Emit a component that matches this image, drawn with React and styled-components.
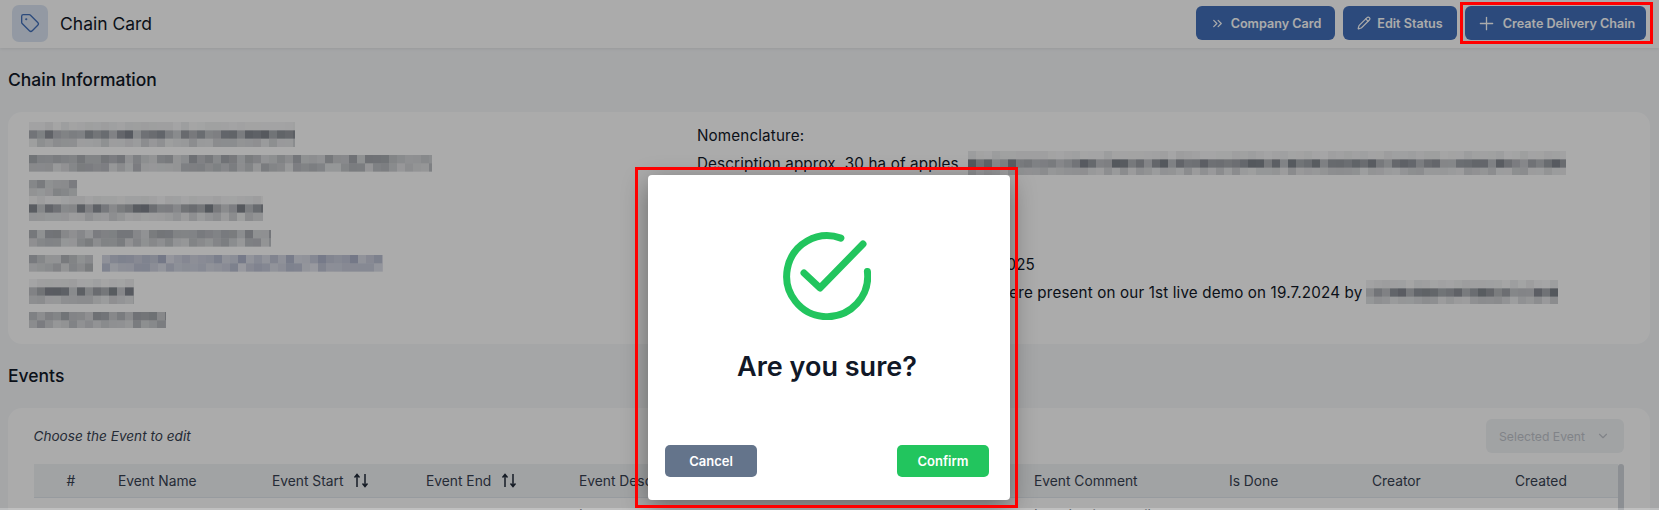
import { useMemo } from "react";
import styled, { createGlobalStyle } from "styled-components";
import { Tag, ChevronsRight, Pencil, Plus, ChevronDown } from "lucide-react";

const GlobalStyle = createGlobalStyle`
  html, body {
    margin: 0;
    height: 510px;
    overflow: hidden;
    background: #f6f8fa;
    font-family: Inter, "Noto Sans", "Liberation Sans", sans-serif;
    color: #111827;
  }
`;

const ROW_WEIGHTS = {
  2: [0.3, 0.24],
  3: [0.07, 0.42, 0.16],
};

// pixelated redaction, the same block pattern for the same seed
function Redacted({ width, rows = 2, seed = 1, tint, top = 0 }) {
  const cols = Math.ceil(width / 8);
  const cells = useMemo(() => {
    let s = seed * 7919;
    const next = () => {
      s = (s * 9301 + 49297) % 233280;
      return s / 233280;
    };
    const out = [];
    for (let r = 0; r < rows; r++) {
      for (let c = 0; c < cols; c++) {
        out.push({ r, c, o: ROW_WEIGHTS[rows][r] * (0.55 + next() * 0.9) });
      }
    }
    return out;
  }, [cols, rows, seed]);
  return (
    <MosaicSvg $top={top} width={width} height={rows * 8.33} viewBox={`0 0 ${width} ${rows * 8}`} preserveAspectRatio="none">
      {cells.map(({ r, c, o }) => (
        <rect key={`${r}-${c}`} x={c * 8} y={r * 8} width={8} height={8} fill={tint || "#2b3340"} opacity={o} />
      ))}
    </MosaicSvg>
  );
}

function SortArrows() {
  return (
    <svg width="16" height="15" viewBox="0 0 16 15" fill="none" stroke="#1f2937" strokeWidth="1.5">
      <path d="M4 14V1.5M1.5 4.5L4 1.5L6.5 4.5" />
      <path d="M12 1V13.5M9.5 10.5L12 13.5L14.5 10.5" />
    </svg>
  );
}

function ConfirmMark() {
  return (
    <svg width="88" height="88" viewBox="0 0 88 88" fill="none" stroke="#22c55e" strokeWidth="7" strokeLinecap="round" strokeLinejoin="round">
      <path d="M57.9 6.1A40.5 40.5 0 1 0 84.4 39.5" />
      <path d="M21 41L37 56L80 12" />
    </svg>
  );
}

export default function App() {
  return (
    <>
      <GlobalStyle />
      <Page>
        <Header>
          <TitleGroup>
            <TagBadge>
              <Tag size={20} strokeWidth={1.6} />
            </TagBadge>
            <PageTitle>Chain Card</PageTitle>
          </TitleGroup>
          <Actions>
            <ActionButton $w={139}>
              <ChevronsRight size={15} />
              Company Card
            </ActionButton>
            <ActionButton $w={114}>
              <Pencil size={14} />
              Edit Status
            </ActionButton>
            <ActionButton $w={181}>
              <Plus size={21} strokeWidth={1.5} />
              Create Delivery Chain
            </ActionButton>
          </Actions>
        </Header>

        <Content>
          <SectionTitle>Chain Information</SectionTitle>
          <InfoCard>
            <RedactedColumn>
              <Redacted width={266} rows={3} seed={3} />
              <Redacted width={403} seed={5} top={8} />
              <Redacted width={48} seed={7} top={8} />
              <Redacted width={234} rows={3} seed={11} />
              <Redacted width={242} seed={13} top={9} />
              <ContactRow $top={8}>
                <Redacted width={64} seed={17} />
                <Redacted width={281} seed={19} tint="#3b4a80" />
              </ContactRow>
              <Redacted width={105} rows={3} seed={23} top={7} />
              <Redacted width={137} seed={29} top={8} />
            </RedactedColumn>
            <InfoColumn>
              <Line>Nomenclature:</Line>
              <Line>
                Description approx. 30 ha of apples.
                <Redacted width={598} rows={3} seed={31} />
              </Line>
              <DateLine>2025</DateLine>
              <DemoLine>
                were present on our 1st live demo on 19.7.2024 by
                <Redacted width={192} rows={3} seed={37} />
              </DemoLine>
            </InfoColumn>
          </InfoCard>

          <SectionTitle>Events</SectionTitle>
          <EventsCard>
            <EventsTop>
              <Hint>Choose the Event to edit</Hint>
              <SelectButton>
                Selected Event
                <ChevronDown size={14} />
              </SelectButton>
            </EventsTop>
            <TableWrap>
              <TableBody>
                <TableHead>
                  <Th $w={84.5} $pad={33}>#</Th>
                  <Th $w={154}>Event Name</Th>
                  <Th $w={154}>Event Start <SortArrows /></Th>
                  <Th $w={153}>Event End <SortArrows /></Th>
                  <Th $w={455}>Event Description</Th>
                  <Th $w={195}>Event Comment</Th>
                  <Th $w={143}>Is Done</Th>
                  <Th $w={143}>Creator</Th>
                  <Th $w={100}>Created</Th>
                </TableHead>
                <TableRow>
                  <Th $w={545.5} />
                  <Th $w={455}>Intro</Th>
                  <Th $w={195}>Introduction email</Th>
                </TableRow>
              </TableBody>
              <ScrollThumb />
            </TableWrap>
          </EventsCard>
        </Content>

        <Overlay>
          <Modal>
            <ConfirmMark />
            <ModalTitle>Are you sure?</ModalTitle>
            <ModalActions>
              <ModalButton $bg="#64748b">Cancel</ModalButton>
              <ModalButton $bg="#22c55e">Confirm</ModalButton>
            </ModalActions>
          </Modal>
        </Overlay>

        <Highlight $left={1460} $top={2} $w={193} $h={42} />
        <Highlight $left={635} $top={167} $w={383} $h={341} />
      </Page>
    </>
  );
}

const Page = styled.div`
  position: relative;
  width: 1659px;
  height: 510px;
  overflow: hidden;
`;

const Header = styled.header`
  height: 48px;
  box-sizing: border-box;
  padding: 0 13px 2px 12px;
  background: #ffffff;
  display: flex;
  align-items: center;
  justify-content: space-between;
  box-shadow: 0 1px 3px rgba(0, 0, 0, 0.08);
`;

const TitleGroup = styled.div`
  display: flex;
  align-items: center;
  gap: 12px;
`;

const TagBadge = styled.div`
  width: 36px;
  height: 37px;
  border-radius: 7px;
  background: #dbe5f3;
  color: #426fba;
  display: flex;
  align-items: center;
  justify-content: center;
`;

const PageTitle = styled.h1`
  margin: 0;
  font-size: 17.5px;
  font-weight: 400;
`;

const Actions = styled.div`
  display: flex;
  gap: 8px;
`;

const ActionButton = styled.button`
  width: ${(p) => p.$w}px;
  height: 34px;
  padding: 0;
  border: none;
  border-radius: 6px;
  background: #426fba;
  color: #ffffff;
  font: 600 12.6px Inter, "Noto Sans", sans-serif;
  display: flex;
  align-items: center;
  justify-content: center;
  gap: 6px;
`;

const Content = styled.main`
  padding: 0 9px 0 8px;
`;

const SectionTitle = styled.h2`
  margin: 21px 0 22px;
  font-size: 17.5px;
  line-height: 21px;
  font-weight: 500;
`;

const InfoCard = styled.section`
  height: 232px;
  box-sizing: border-box;
  background: #ffffff;
  border-radius: 14px;
  padding: 9px 21px;
  display: grid;
  grid-template-columns: 668px 1fr;
`;

const InfoColumn = styled.div`
  display: flex;
  flex-direction: column;
`;

const RedactedColumn = styled(InfoColumn)`
  padding-top: 1px;
`;

const ContactRow = styled.div`
  display: flex;
  gap: 9px;
  margin-top: ${(p) => p.$top}px;
`;

const Line = styled.div`
  height: 28px;
  display: flex;
  align-items: center;
  gap: 5px;
  font-size: 15.2px;
  letter-spacing: 0.15px;
  white-space: nowrap;
`;

const DateLine = styled(Line)`
  margin-top: 73px;
  padding-left: 300px;
`;

const DemoLine = styled(Line)`
  padding-left: 300px;
  gap: 4px;
`;

const MosaicSvg = styled.svg`
  display: block;
  flex: none;
  margin-top: ${(p) => p.$top}px;
`;

const EventsCard = styled.section`
  background: #ffffff;
  border-radius: 14px;
  padding: 11px 26px 0 25.5px;
  height: 102px;
  overflow: hidden;
`;

const EventsTop = styled.div`
  display: flex;
  align-items: center;
  justify-content: space-between;
  height: 34px;
`;

const Hint = styled.span`
  font-size: 13.6px;
  font-style: italic;
  color: #374151;
`;

const SelectButton = styled.div`
  width: 138px;
  height: 34px;
  box-sizing: border-box;
  padding: 0 14px 0 13px;
  border-radius: 6px;
  background: #f1f3f5;
  color: #bfc4cb;
  font-size: 12.2px;
  display: flex;
  align-items: center;
  justify-content: space-between;
  white-space: nowrap;
`;

const TableWrap = styled.div`
  margin-top: 11px;
  display: flex;
`;

const TableBody = styled.div`
  flex: 1;
  min-width: 0;
`;

const TableHead = styled.div`
  display: flex;
  align-items: center;
  height: 33px;
  background: #f1f3f5;
  border-bottom: 1px solid #e2e7ed;
  overflow: hidden;
`;

const TableRow = styled.div`
  display: flex;
  padding-top: 8px;
`;

const Th = styled.div`
  flex: none;
  width: ${(p) => p.$w}px;
  box-sizing: border-box;
  padding-left: ${(p) => p.$pad || 0}px;
  font-size: 13.8px;
  line-height: 18px;
  color: #374151;
  display: flex;
  align-items: center;
  gap: 10px;
  white-space: nowrap;
`;

const ScrollThumb = styled.div`
  flex: none;
  width: 6px;
  height: 60px;
  border-radius: 3px;
  background: #d1d5db;
`;

const Overlay = styled.div`
  position: absolute;
  inset: 0;
  background: rgba(0, 0, 0, 0.33);
  border-bottom: 2px solid rgba(255, 255, 255, 0.25);
  display: flex;
  justify-content: center;
  padding-top: 175px;
  box-sizing: border-box;
`;

const Modal = styled.div`
  width: 362px;
  height: 325px;
  box-sizing: border-box;
  margin-left: -1px;
  padding: 57px 21px 23px 17px;
  background: #ffffff;
  border-radius: 4px;
  box-shadow: 0 8px 26px rgba(0, 0, 0, 0.4);
  display: flex;
  flex-direction: column;
  align-items: center;
`;

const ModalTitle = styled.h3`
  margin: 29px 0 0;
  font-size: 27px;
  line-height: 36px;
  font-weight: 600;
  color: #111827;
`;

const ModalActions = styled.div`
  margin-top: auto;
  width: 100%;
  display: flex;
  justify-content: space-between;
`;

const ModalButton = styled.button`
  width: 92px;
  height: 32px;
  border: none;
  border-radius: 5px;
  background: ${(p) => p.$bg};
  color: #ffffff;
  font: 600 13px Inter, "Noto Sans", sans-serif;
`;

const Highlight = styled.div`
  position: absolute;
  left: ${(p) => p.$left}px;
  top: ${(p) => p.$top}px;
  width: ${(p) => p.$w}px;
  height: ${(p) => p.$h}px;
  box-sizing: border-box;
  border: 3px solid #ff0000;
`;
